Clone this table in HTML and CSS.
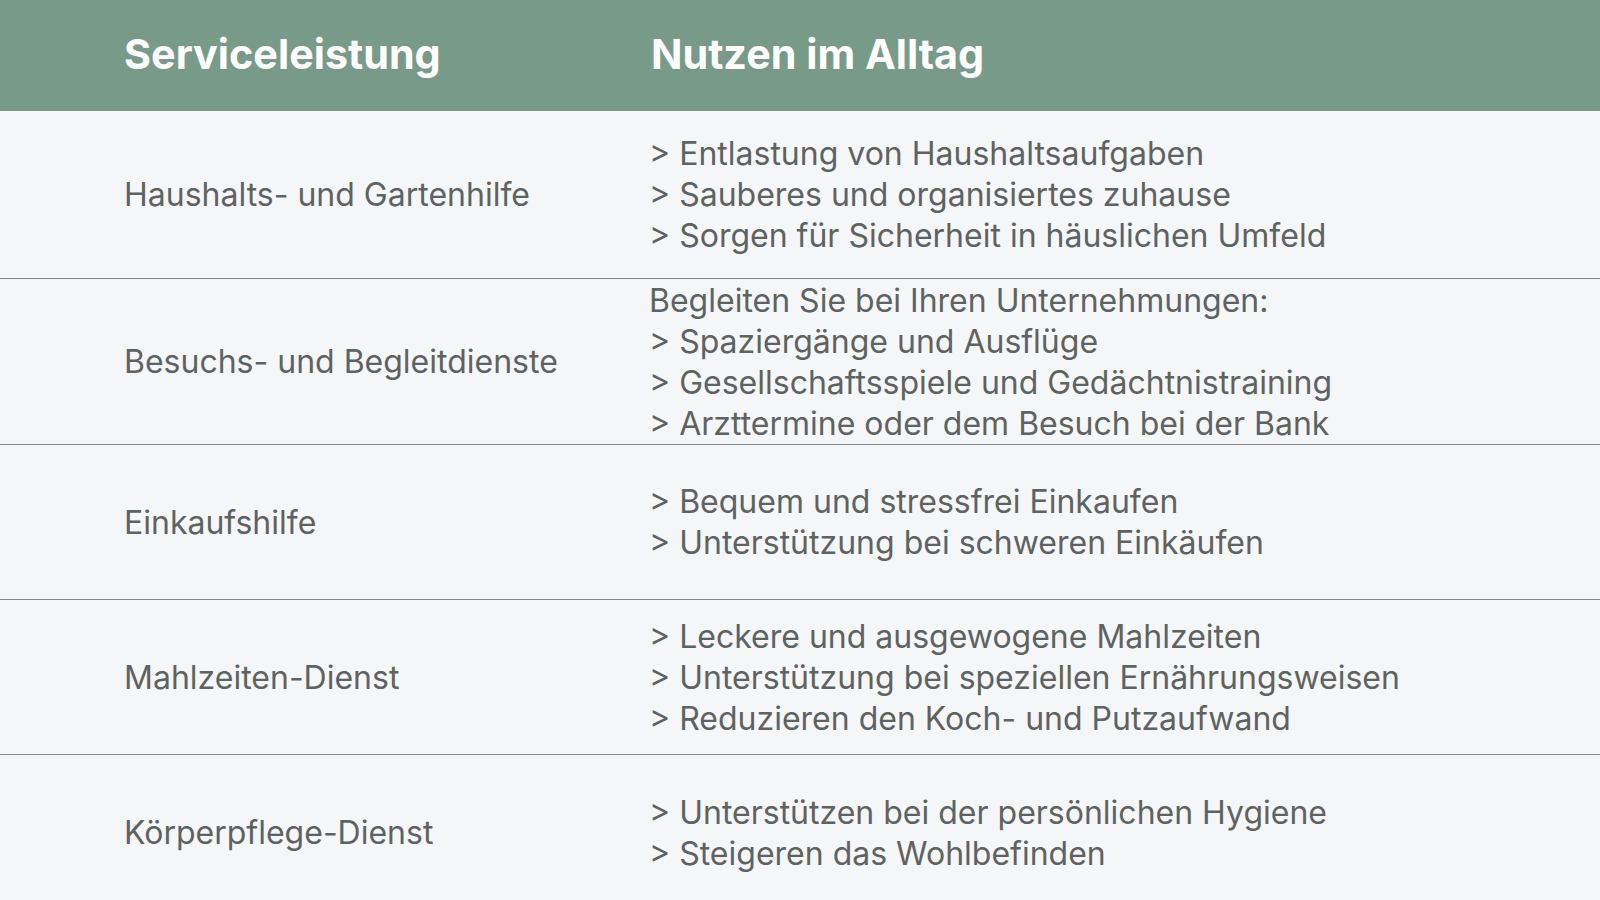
FILE: index.html
```html
<!DOCTYPE html>
<html lang="de">
<head>
<meta charset="utf-8">
<title>Serviceleistungen</title>
<link rel="stylesheet" href="styles.css">
</head>
<body>
<div class="table">
  <div class="row head">
    <div class="cell c1">Serviceleistung</div>
    <div class="cell c2">Nutzen im Alltag</div>
  </div>
  <div class="row r1">
    <div class="cell c1">Haushalts- und Gartenhilfe</div>
    <div class="cell c2">
      <div>&gt; Entlastung von Haushaltsaufgaben</div>
      <div>&gt; Sauberes und organisiertes zuhause</div>
      <div>&gt; Sorgen für Sicherheit in häuslichen Umfeld</div>
    </div>
  </div>
  <div class="row r2">
    <div class="cell c1">Besuchs- und Begleitdienste</div>
    <div class="cell c2">
      <div>Begleiten Sie bei Ihren Unternehmungen:</div>
      <div>&gt; Spaziergänge und Ausflüge</div>
      <div>&gt; Gesellschaftsspiele und Gedächtnistraining</div>
      <div>&gt; Arzttermine oder dem Besuch bei der Bank</div>
    </div>
  </div>
  <div class="row">
    <div class="cell c1">Einkaufshilfe</div>
    <div class="cell c2">
      <div>&gt; Bequem und stressfrei Einkaufen</div>
      <div>&gt; Unterstützung bei schweren Einkäufen</div>
    </div>
  </div>
  <div class="row">
    <div class="cell c1">Mahlzeiten-Dienst</div>
    <div class="cell c2">
      <div>&gt; Leckere und ausgewogene Mahlzeiten</div>
      <div>&gt; Unterstützung bei speziellen Ernährungsweisen</div>
      <div>&gt; Reduzieren den Koch- und Putzaufwand</div>
    </div>
  </div>
  <div class="row last">
    <div class="cell c1">Körperpflege-Dienst</div>
    <div class="cell c2">
      <div>&gt; Unterstützen bei der persönlichen Hygiene</div>
      <div>&gt; Steigeren das Wohlbefinden</div>
    </div>
  </div>
</div>
</body>
</html>
```

FILE: styles.css
```css
html, body {
  margin: 0;
  padding: 0;
  background: #f5f6f8;
  overflow: hidden;
}
.table {
  width: 1600px;
  font-family: Inter, "Noto Sans", sans-serif;
  color: #5d6360;
}
.row {
  display: grid;
  grid-template-columns: 525px 1fr;
  padding-left: 124px;
  height: 154px;
  border-bottom: 1px solid #858a88;
  align-items: center;
  font-size: 32px;
  line-height: 41px;
}
.row.head {
  grid-template-columns: 527px 1fr;
  height: 108px;
  padding-bottom: 3px;
  background: #789b89;
  border-bottom: none;
  color: #ffffff;
  font-weight: 700;
  font-size: 41.3px;
  line-height: 48px;
}
.row.r1 { height: 167px; }
.row.r2 { height: 165px; }
.row.last { height: 155px; border-bottom: none; }
```
